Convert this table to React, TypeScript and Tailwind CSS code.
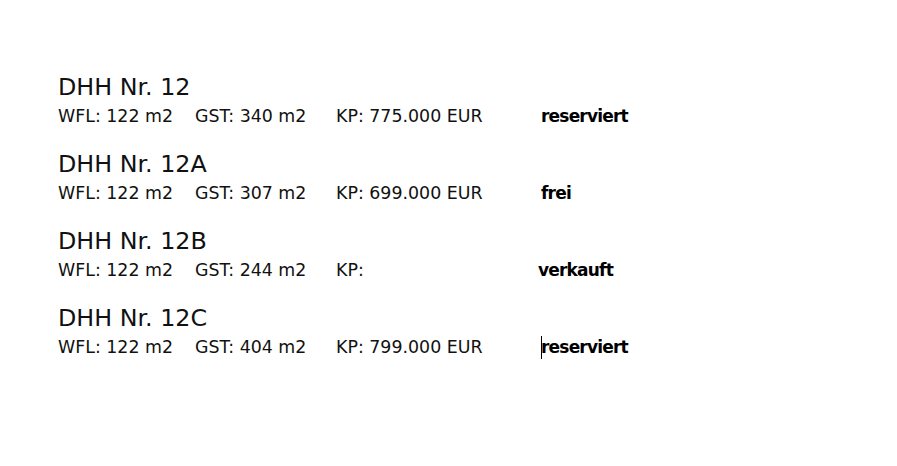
import React from 'react';

type Unit = {
  name: string;
  wfl: string;
  gst: string;
  kp: string;
  status: string;
  shift?: boolean;
  caret?: boolean;
};

const units: Unit[] = [
  { name: 'DHH Nr. 12', wfl: '122 m2', gst: '340 m2', kp: '775.000 EUR', status: 'reserviert' },
  { name: 'DHH Nr. 12A', wfl: '122 m2', gst: '307 m2', kp: '699.000 EUR', status: 'frei' },
  { name: 'DHH Nr. 12B', wfl: '122 m2', gst: '244 m2', kp: '', status: 'verkauft', shift: true },
  { name: 'DHH Nr. 12C', wfl: '122 m2', gst: '404 m2', kp: '799.000 EUR', status: 'reserviert', caret: true },
];

const App: React.FC = () => {
  return (
    <div className="w-[897px] h-[466px] bg-white text-[#111] font-['DejaVu_Sans',sans-serif]">
      <div className="pl-[58px] pt-[73px] flex flex-col gap-[24px]">
        {units.map(unit => (
          <div key={unit.name} className="flex flex-col gap-[5px]">
            <h2 className="text-[23.8px] leading-[28px] font-normal">{unit.name}</h2>
            <div className="flex text-[17.4px] leading-[20px]">
              <span className="w-[137px]">WFL: {unit.wfl}</span>
              <span className="w-[141px]">GST: {unit.gst}</span>
              <span className="w-[205px]">KP: {unit.kp}</span>
              <span className={`relative font-bold text-[17px] tracking-[-0.8px] text-black ${unit.shift ? '-ml-[3px]' : ''}`}>
                {unit.caret && (
                  <span className="absolute left-0 top-[-1px] h-[23px] w-px bg-black" />
                )}
                {unit.status}
              </span>
            </div>
          </div>
        ))}
      </div>
    </div>
  );
};

export default App;
